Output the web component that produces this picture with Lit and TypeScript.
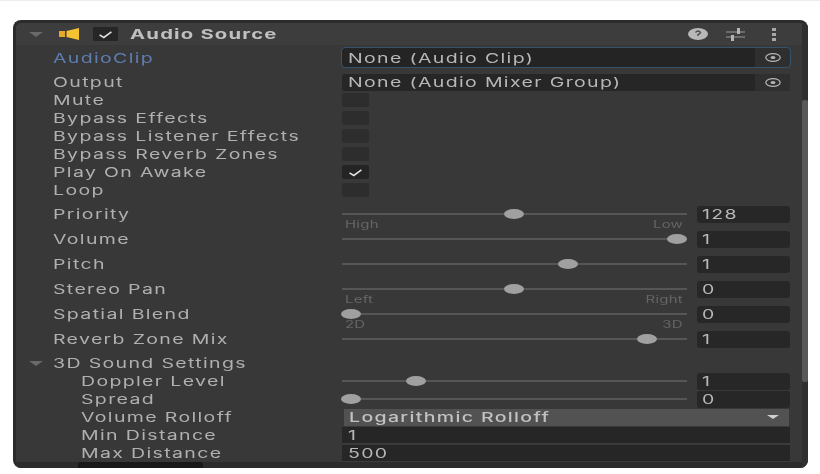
import { LitElement, html, css, nothing } from "lit";
import { customElement } from "lit/decorators.js";

const check = html`<svg class="chk" viewBox="0 0 20 10"><path d="M3 5.5 L8 8.5 L17 2" fill="none" stroke="#e2e2e2" stroke-width="1.8"/></svg>`;
const target = html`<svg class="tgt" viewBox="0 0 20 12"><ellipse cx="10" cy="6" rx="8" ry="4.4" fill="none" stroke="#b4b4b4" stroke-width="1.4"/><ellipse cx="10" cy="6" rx="2.8" ry="1.7" fill="#b4b4b4"/></svg>`;

@customElement("app-root")
export class AppRoot extends LitElement {
  static styles = css`
    :host { display: block; width: 820px; height: 474px; overflow: hidden; background: #fff; font-family: "Inter", "Liberation Sans", sans-serif; }
    * { box-sizing: border-box; }
    .page { height: 474px; padding: 20px 12px 6px 13px; border-top: 1px solid #ececec; }
    .panel { margin-top: -1px; height: 448px; background: #383838; border: 3px solid #2b2b2b; border-right: 0; border-bottom: 0; border-radius: 8px; display: flex; overflow: hidden; filter: blur(0.7px); }
    .main { flex: 1; min-width: 0; display: flex; flex-direction: column; overflow: hidden; }
    .gutter { width: 6px; background: #2f2f2f; padding-top: 77px; }
    .thumb { height: 282px; background: #585858; border-radius: 2px; }
    .tx { display: inline-block; white-space: nowrap; transform: scaleX(1.5); transform-origin: left center; letter-spacing: 0.9px; }
    .head { height: 22px; flex: none; background: #3d3d3d; display: flex; align-items: center; color: #bcbcbc; }
    .tri { width: 0; height: 0; border-left: 7px solid transparent; border-right: 7px solid transparent; border-top: 5px solid #6a6a6a; }
    .tri.head-tri { margin-left: 13px; }
    .spk { width: 20px; height: 12px; margin-left: 16px; }
    .toggle { width: 25px; height: 14px; margin-left: 14px; background: #262626; display: flex; align-items: center; justify-content: center; }
    .chk { width: 17px; height: 9px; display: block; }
    .title { margin-left: 12px; font-size: 13.5px; font-weight: 700; flex: 1; color: #c0c0c0; }
    .title .tx { letter-spacing: 0.8px; }
    .hicons { display: flex; align-items: center; margin-right: 26px; }
    .help { width: 20px; height: 12px; }
    .sl { width: 19px; height: 14px; margin-left: 18px; }
    .keb { width: 4px; height: 13px; margin-left: 27px; }
    .row { height: 18px; flex: none; display: grid; grid-template-columns: 289px 448px; padding-left: 37px; align-items: center; font-size: 13px; color: #b0b0b0; }
    .gap { margin-top: 7px; }
    .gap6 { margin-top: 6px; }
    .gap3 { margin-top: 3px; }
    .blue { color: #5f7db3; }
    .sub { padding-left: 65px; grid-template-columns: 261px 448px; }
    .section { position: relative; grid-template-columns: 1fr; }
    .section .tri { position: absolute; left: 13px; top: 7px; }
    .obj { height: 17px; background: #262626; border-radius: 3px; display: flex; align-items: center; padding-left: 6px; color: #b8b8b8; }
    .obj .grow { flex: 1; }
    .focus { height: 19px; outline: 1px solid #35536f; background: #242424; }
    .pick { width: 35px; height: 100%; background: #2f2f2f; border-radius: 0 3px 3px 0; display: flex; align-items: center; justify-content: center; }
    .tgt { width: 18px; height: 11px; }
    .cb { width: 27px; height: 14px; background: #2d2d2d; border-radius: 2px; display: flex; align-items: center; justify-content: center; }
    .cb.on { background: #242424; }
    .slider { display: grid; grid-template-columns: 345px 93px; column-gap: 10px; align-items: center; }
    .track { position: relative; height: 2px; background: #565656; }
    .knob { position: absolute; top: -4px; width: 20px; height: 10px; margin-left: -10px; border-radius: 50%; background: #a0a0a0; }
    .hint { position: absolute; top: 5px; font-size: 10px; color: #656565; line-height: 12px; }
    .hint .tx { letter-spacing: 0.15px; }
    .hint.l { left: 3px; }
    .hint.r { right: 4px; }
    .hint.r .tx { transform-origin: right center; }
    .num { height: 17px; background: #272727; border-radius: 3px; padding-left: 5px; line-height: 17px; color: #b8b8b8; }
    .drop { height: 17px; margin-left: 2px; margin-right: 1px; background: #525252; display: flex; align-items: center; padding-left: 5px; padding-right: 10px; color: #c2c2c2; font-weight: 500; }
    .drop .grow { flex: 1; }
    .drop i { width: 0; height: 0; border-left: 6px solid transparent; border-right: 6px solid transparent; border-top: 4px solid #d0d0d0; }
    .field { height: 17px; background: #262626; padding-left: 6px; line-height: 17px; color: #b8b8b8; border-bottom: 1px solid #3c3c3c; }
    .cut { flex: 1; background: #2c2c2c; padding-left: 62px; }
    .cut div { width: 125px; height: 6px; background: #191919; border-radius: 3px 3px 0 0; }
  `;

  private t(s: string) {
    return html`<span class="tx">${s}</span>`;
  }

  private cbRow(label: string, on = false) {
    return html`<div class="row"><div>${this.t(label)}</div><div class="cb ${on ? "on" : ""}">${on ? check : nothing}</div></div>`;
  }

  private slRow(label: string, f: number, val: string, opts: { gap?: string; sub?: boolean; l?: string; r?: string } = {}) {
    const left = `calc(9px + ${f * 326}px)`;
    return html`<div class="row ${opts.gap ?? ""} ${opts.sub ? "sub" : ""}">
      <div>${this.t(label)}</div>
      <div class="slider">
        <div class="track">
          <div class="knob" style="left:${left}"></div>
          ${opts.l ? html`<div class="hint l">${this.t(opts.l)}</div>` : nothing}
          ${opts.r ? html`<div class="hint r">${this.t(opts.r)}</div>` : nothing}
        </div>
        <div class="num">${this.t(val)}</div>
      </div>
    </div>`;
  }

  render() {
    return html`<div class="page"><div class="panel">
      <div class="main">
        <div class="head">
          <div class="tri head-tri"></div>
          <svg class="spk" viewBox="0 0 20 12"><path d="M0 3h6v6H0z" fill="#e8a82c"/><path d="M7.5 3 L20 0 V12 L7.5 9z" fill="#f4c430"/></svg>
          <div class="toggle">${check}</div>
          <div class="title">${this.t("Audio Source")}</div>
          <div class="hicons">
            <svg class="help" viewBox="0 0 20 12"><ellipse cx="10" cy="6" rx="10" ry="6" fill="#b8b8b8"/><path d="M7.5 4.5 Q10 1.5 12.5 4.5 Q12 6 10 6.5 V8" fill="none" stroke="#4a4a4a" stroke-width="1.3"/></svg>
            <svg class="sl" viewBox="0 0 19 14"><path d="M0 5h19M0 10h19" stroke="#9a9a9a" stroke-width="1.2"/><rect x="11" y="1" width="3" height="6" fill="#b4b4b4"/><rect x="5" y="8" width="3" height="6" fill="#b4b4b4"/></svg>
            <svg class="keb" viewBox="0 0 4 13"><rect y="0" width="4" height="3" fill="#a8a8a8"/><rect y="5" width="4" height="3" fill="#a8a8a8"/><rect y="10" width="4" height="3" fill="#a8a8a8"/></svg>
          </div>
        </div>

        <div class="row gap3"><div class="blue">${this.t("AudioClip")}</div><div class="obj focus"><div class="grow">${this.t("None (Audio Clip)")}</div><div class="pick">${target}</div></div></div>
        <div class="row gap"><div>${this.t("Output")}</div><div class="obj"><div class="grow">${this.t("None (Audio Mixer Group)")}</div><div class="pick">${target}</div></div></div>
        ${this.cbRow("Mute")}
        ${this.cbRow("Bypass Effects")}
        ${this.cbRow("Bypass Listener Effects")}
        ${this.cbRow("Bypass Reverb Zones")}
        ${this.cbRow("Play On Awake", true)}
        ${this.cbRow("Loop")}

        ${this.slRow("Priority", 0.5, "128", { gap: "gap6", l: "High", r: "Low" })}
        ${this.slRow("Volume", 1, "1", { gap: "gap" })}
        ${this.slRow("Pitch", 2 / 3, "1", { gap: "gap" })}
        ${this.slRow("Stereo Pan", 0.5, "0", { gap: "gap", l: "Left", r: "Right" })}
        ${this.slRow("Spatial Blend", 0, "0", { gap: "gap", l: "2D", r: "3D" })}
        ${this.slRow("Reverb Zone Mix", 1 / 1.1, "1", { gap: "gap" })}

        <div class="row section gap6"><div class="tri"></div><div>${this.t("3D Sound Settings")}</div></div>
        ${this.slRow("Doppler Level", 0.2, "1", { sub: true })}
        ${this.slRow("Spread", 0, "0", { sub: true })}
        <div class="row sub"><div>${this.t("Volume Rolloff")}</div><div class="drop"><div class="grow">${this.t("Logarithmic Rolloff")}</div><i></i></div></div>
        <div class="row sub"><div>${this.t("Min Distance")}</div><div class="field">${this.t("1")}</div></div>
        <div class="row sub"><div>${this.t("Max Distance")}</div><div class="field">${this.t("500")}</div></div>
        <div class="cut"><div></div></div>
      </div>
      <div class="gutter"><div class="thumb"></div></div>
    </div></div>`;
  }
}
